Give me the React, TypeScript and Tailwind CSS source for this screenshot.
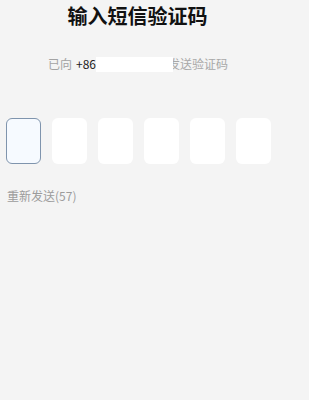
import React from 'react';

const font = { fontFamily: '"Noto Sans CJK SC", "Liberation Sans", sans-serif' };

export default function App() {
  const boxes = [0, 1, 2, 3, 4, 5];
  return (
    <div className="h-[400px] w-[309px] overflow-hidden bg-[#f4f4f4]" style={font}>
      {/* Title */}
      <div className="flex justify-center pr-[34px] pt-[2px]">
        <h1 className="text-[20px] font-bold leading-[28px] text-[#111]">输入短信验证码</h1>
      </div>

      {/* Phone line */}
      <div className="mt-[26px] flex items-center pl-[48px] text-[12px] leading-[16px]">
        <span className="text-[#a3a3a3]">已向</span>
        <span className="ml-[4px] text-[#222]">+86</span>
        <span className="relative z-10 mr-[-5px] inline-block h-[15px] w-[77px] bg-white" />
        <span className="text-[#a8a8a8]">发送验证码</span>
      </div>

      {/* Code boxes */}
      <div className="mt-[46px] flex gap-[11px] pl-[6px]">
        {boxes.map((i) => (
          <div
            key={i}
            className={
              i === 0
                ? 'h-[46px] w-[35px] rounded-[6px] border border-[#7f94ad] bg-[#f6faff]'
                : 'h-[46px] w-[35px] rounded-[6px] bg-white'
            }
          />
        ))}
      </div>

      {/* Resend */}
      <div className="mt-[24px] pl-[7px] text-[12px] leading-[16px] text-[#9c9c9c]">重新发送(57)</div>
    </div>
  );
}
